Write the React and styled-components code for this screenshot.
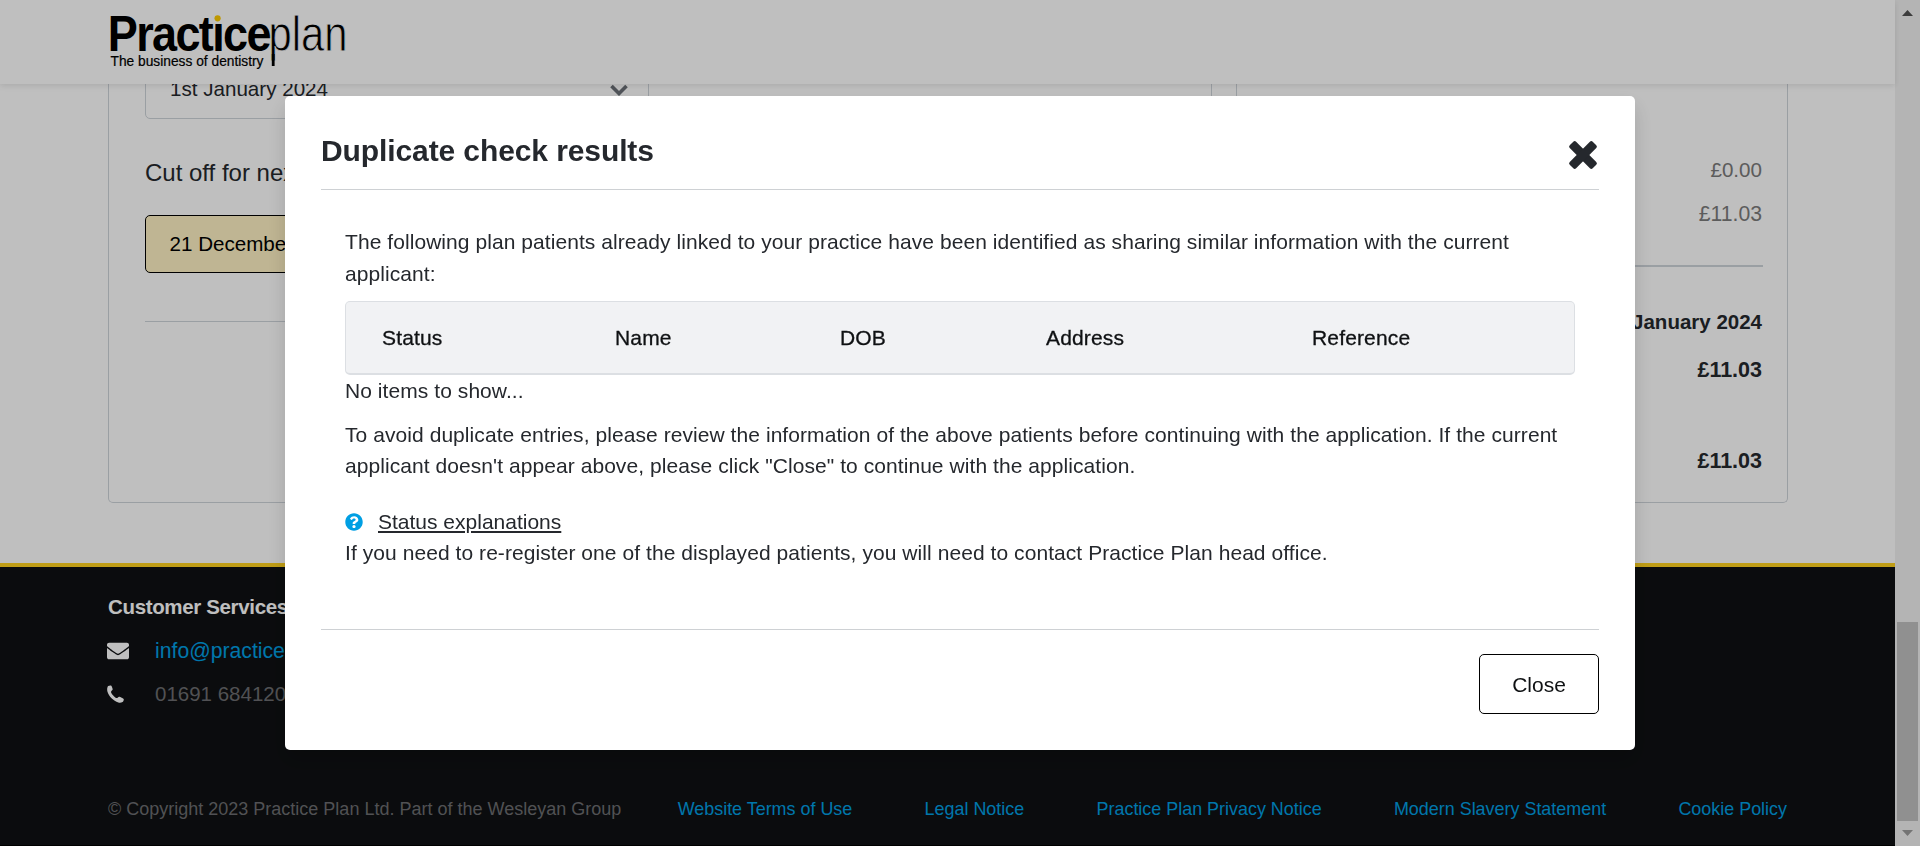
import React from "react";
import styled, { createGlobalStyle } from "styled-components";
import { FaQuestionCircle, FaEnvelope } from "react-icons/fa";

const GlobalStyle = createGlobalStyle`
  *, *::before, *::after { box-sizing: border-box; }
  body {
    margin: 0;
    overflow: hidden;
    background: #fff;
    color: #25282d;
    font-family: "Liberation Sans", Arial, sans-serif;
    font-size: 21px;
    line-height: 31.2px;
  }
  h2, h4, p, ul { margin: 0; padding: 0; }
  svg { display: block; }
`;

const Shell = styled.div`
  display: flex;
  width: 1920px;
  height: 846px;
  overflow: hidden;
`;

const Page = styled.div`
  display: flex;
  flex-direction: column;
  flex: 1;
`;

const Header = styled.header`
  position: relative;
  z-index: 1;
  flex: 0 0 84px;
  background: #fff;
  box-shadow: 0 2px 6px rgba(0, 0, 0, 0.1);
`;

const Main = styled.main`
  flex: 0 0 479px;
  display: flex;
  gap: 24px;
  padding: 0 107px 60px 108px;
`;

const Card = styled.section`
  flex: ${(p) => (p.$wide ? "0 0 1104px" : "1")};
  border: 1px solid #ced4da;
  border-top: 0;
  border-radius: 0 0 5px 5px;
  padding: ${(p) => (p.$wide ? "0 36px" : "0 24px")};
`;

const Select = styled.div`
  display: flex;
  align-items: center;
  justify-content: space-between;
  width: 504px;
  height: 60px;
  margin-top: -25px;
  padding: 0 20px 0 24px;
  border: 1px solid #ced4da;
  border-radius: 5px;
  font-size: 20.6px;
`;

const FieldTitle = styled.h4`
  margin-top: 39px;
  font-size: 24px;
  font-weight: 400;
  line-height: 30px;
`;

const Notice = styled.div`
  width: 504px;
  height: 58px;
  margin-top: 27px;
  padding-left: 23.5px;
  border: 1px solid #000;
  border-radius: 5px;
  background: #fff2c4;
  color: #000;
  font-size: 20.6px;
  line-height: 55px;
`;

const Rule = styled.hr`
  height: ${(p) => p.$h || 1}px;
  margin: ${(p) => p.$m || 0} 0 0;
  border: 0;
  background: #ced4da;
`;

const Amount = styled.p`
  margin-top: ${(p) => p.$gap}px;
  padding-right: 1px;
  color: ${(p) => (p.$bold ? "#25282d" : "#7b7b7b")};
  font-size: ${(p) => p.$size || 21}px;
  font-weight: ${(p) => (p.$bold ? 700 : 400)};
  line-height: 30px;
  text-align: right;
`;

const Footer = styled.footer`
  flex: 1;
  display: flex;
  flex-direction: column;
  justify-content: space-between;
  padding: 25px 108px 21px;
  border-top: 4px solid #ffd21f;
  border-bottom: 1px solid #000;
  background: #0f1113;
  color: #6c6d70;
`;

const FooterTitle = styled.h4`
  margin-bottom: 7px;
  color: #fff;
  font-size: 20.5px;
  letter-spacing: -0.35px;
  line-height: 30px;
`;

const Contact = styled.div`
  display: grid;
  grid-template-columns: 47px auto;
  align-items: center;
  height: 43px;
  color: ${(p) => (p.$link ? "#009fe3" : "#6c6d70")};
  font-size: ${(p) => (p.$link ? 21.2 : 20.5)}px;

  svg { margin-left: -1px; color: #fff; }
`;

const Legal = styled.div`
  display: flex;
  justify-content: space-between;
  font-size: 18px;
  line-height: 30px;
`;

const LegalLinks = styled.nav`
  display: flex;
  gap: 72.3px;
  color: #009fe3;
  font-size: 17.93px;
`;

const Scrollbar = styled.div`
  flex: 0 0 25px;
  display: flex;
  flex-direction: column;
  align-items: center;
  padding: 10px 0 10px;
  background: #f1f1f1;
`;

const Thumb = styled.div`
  width: 21px;
  height: 199px;
  margin: auto 0 9px;
  background: #c1c1c1;
`;

const Overlay = styled.div`
  position: fixed;
  inset: 0;
  z-index: 2;
  display: flex;
  align-items: flex-start;
  justify-content: center;
  padding-top: 96px;
  background: rgba(0, 0, 0, 0.25);
`;

const Modal = styled.div`
  display: flex;
  flex-direction: column;
  width: 1350px;
  height: 654px;
  padding: 0 36px;
  border-radius: 5px;
  background: #fff;
  box-shadow: 0 10px 20px rgba(0, 0, 0, 0.15);
`;

const ModalHeader = styled.div`
  flex: 0 0 94px;
  display: flex;
  justify-content: space-between;
  padding-top: 37px;
  border-bottom: 1px solid #ced1d4;

  h2 {
    font-size: 30px;
    letter-spacing: -0.1px;
    line-height: 36px;
  }
  svg { margin: 7px 1px 0 0; }
`;

const ModalBody = styled.div`
  flex: 1;
  padding: 36px 24px 0;
  letter-spacing: 0.065px;
`;

const Columns = styled.div`
  display: grid;
  grid-template-columns: 233px 225px 206px 266px auto;
  height: 74px;
  margin-top: 11px;
  padding-left: 36px;
  border: 1px solid #dcdfe3;
  border-bottom-width: 2px;
  border-radius: 5px;
  background: #f1f2f4;
  color: #0f1113;
  letter-spacing: 0.15px;
  line-height: 72px;
  -webkit-text-stroke: 0.3px #0f1113;
`;

const Paragraph = styled.p`
  margin-top: ${(p) => p.$gap || 0}px;
  line-height: ${(p) => (p.$loose ? 32 : 31.2)}px;
`;

const HelpLine = styled.div`
  display: flex;
  align-items: center;
  gap: 15px;
  margin-top: 25px;

  svg { color: #009fe3; }
  a {
    font-size: 21px;
    letter-spacing: 0;
    text-decoration: underline;
    text-decoration-thickness: 2px;
    text-underline-offset: 2px;
  }
`;

const ModalFooter = styled.div`
  flex: 0 0 121px;
  display: flex;
  justify-content: flex-end;
  align-items: flex-start;
  padding-top: 24px;
  border-top: 1px solid #ced1d4;
`;

const CloseButton = styled.button`
  width: 120px;
  height: 60px;
  padding: 2px 0 0;
  border: 1px solid #000;
  border-radius: 5px;
  background: #fff;
  color: #0f1113;
  font: 21px "Liberation Sans", Arial, sans-serif;
`;

const Logo = () => (
  <svg width="400" height="84" viewBox="0 0 400 84">
    <text transform="translate(107.8 50.7) scale(0.9 1)" fontSize="50" fontWeight="700" letterSpacing="-1.8">Practice</text>
    <rect x="213.500" y="8" width="10.500" height="15.500" fill="#fff" />
    <circle cx="217.600" cy="18.300" r="3.100" fill="#fecb00" />
    <text x="268.500" y="50.7" fontSize="50" textLength="79" lengthAdjust="spacingAndGlyphs" stroke="#fff" strokeWidth="0.8">plan</text>
    <rect x="271.800" y="54" width="2.800" height="12" />
    <text x="110.500" y="66" fontSize="14" textLength="153" lengthAdjust="spacingAndGlyphs" stroke="#000" strokeWidth="0.2">The business of dentistry</text>
  </svg>
);

const CloseIcon = () => (
  <svg width="30" height="30" viewBox="-15 -15 30 30" fill="currentColor">
    <rect x="-16.25" y="-4.5" width="32.5" height="9" rx="2" transform="rotate(45)" />
    <rect x="-16.25" y="-4.5" width="32.5" height="9" rx="2" transform="rotate(-45)" />
  </svg>
);

const PhoneIcon = () => (
  <svg width="17" height="18" viewBox="0 0 17 18" fill="currentColor">
    <path d="M1.200 1.100C2 .5 3.200 .2 4 .5C4.600.8 5.700 3.500 5.700 4.300C5.700 5.200 4 6 4 6.900C4.200 8.400 7.500 12.300 9.400 13C10.400 13.300 11.200 11.700 12.100 11.700C13 11.700 16.500 13.400 16.700 13.900C17 15 16.300 16.600 15.500 17.100C14.200 17.700 12.800 17.900 11.300 17.400C6.500 15.800 1.700 11.200.4 6.400C-.1 4.500.2 2 1.200 1.100Z" />
  </svg>
);

const Arrow = ({ up }) => (
  <svg width="11" height="6" viewBox="0 0 11 6" fill={up ? "#505050" : "#9b9b9b"}>
    <path d={up ? "M0 6L5.500 0L11 6Z" : "M0 0L5.500 6L11 0Z"} />
  </svg>
);

const legalLinks = ["Website Terms of Use", "Legal Notice", "Practice Plan Privacy Notice", "Modern Slavery Statement", "Cookie Policy"];
const columns = ["Status", "Name", "DOB", "Address", "Reference"];

export default function App() {
  return (
    <>
      <GlobalStyle />
      <Shell>
        <Page>
          <Header><Logo /></Header>
          <Main>
            <Card $wide>
              <Select>
                1st January 2024
                <svg width="18" height="13" viewBox="0 0 18 13" fill="none" stroke="#6b7077" strokeWidth="3.6">
                  <path d="M1.500 3L9 10.500L16.500 3" />
                </svg>
              </Select>
              <FieldTitle>Cut off for next collection</FieldTitle>
              <Notice>21 December 2023</Notice>
              <Rule $m="48px" />
            </Card>
            <Card>
              <Amount $gap={71} $size={20.6}>£0.00</Amount>
              <Amount $gap={14} $size={21.2}>£11.03</Amount>
              <Rule $h={2} $m="36px" />
              <Amount $bold $gap={40} $size={20.5}>1st January 2024</Amount>
              <Amount $bold $gap={18} $size={21.5}>£11.03</Amount>
              <Amount $bold $gap={61} $size={21.5}>£11.03</Amount>
            </Card>
          </Main>
          <Footer>
            <div>
              <FooterTitle>Customer Services</FooterTitle>
              <Contact $link><FaEnvelope size={22} />info@practiceplan.co.uk</Contact>
              <Contact><PhoneIcon />01691 684120</Contact>
            </div>
            <Legal>
              <span>© Copyright 2023 Practice Plan Ltd. Part of the Wesleyan Group</span>
              <LegalLinks>{legalLinks.map((l) => <span key={l}>{l}</span>)}</LegalLinks>
            </Legal>
          </Footer>
        </Page>
        <Scrollbar><Arrow up /><Thumb /><Arrow /></Scrollbar>
      </Shell>
      <Overlay>
        <Modal role="dialog">
          <ModalHeader>
            <h2>Duplicate check results</h2>
            <CloseIcon />
          </ModalHeader>
          <ModalBody>
            <Paragraph $loose>
              The following plan patients already linked to your practice have been identified as sharing similar information with the current applicant:
            </Paragraph>
            <Columns>{columns.map((c) => <span key={c}>{c}</span>)}</Columns>
            <Paragraph>No items to show...</Paragraph>
            <Paragraph $gap={12.5}>
              To avoid duplicate entries, please review the information of the above patients before continuing with the application. If the current applicant doesn't appear above, please click "Close" to continue with the application.
            </Paragraph>
            <HelpLine><FaQuestionCircle size={18} /><a>Status explanations</a></HelpLine>
            <Paragraph>
              If you need to re-register one of the displayed patients, you will need to contact Practice Plan head office.
            </Paragraph>
          </ModalBody>
          <ModalFooter><CloseButton>Close</CloseButton></ModalFooter>
        </Modal>
      </Overlay>
    </>
  );
}
